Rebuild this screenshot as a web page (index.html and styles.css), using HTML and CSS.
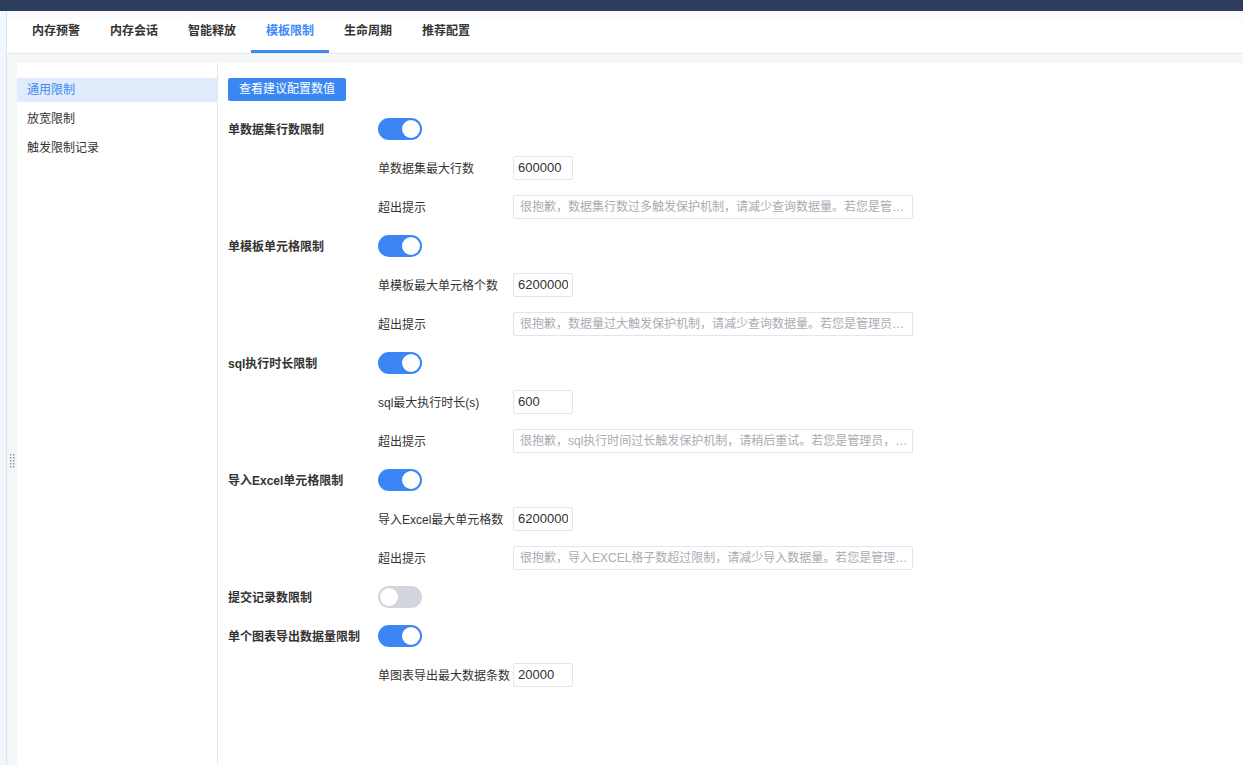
FILE: index.html
```html
<!DOCTYPE html>
<html lang="zh-CN">
<head>
<meta charset="utf-8">
<title>模板限制</title>
<link rel="stylesheet" href="styles.css">
</head>
<body>
<div class="topbar"></div>
<div class="frame">
  <div class="edge"></div>
  <div class="page">
    <nav class="tabs">
      <div class="tab">内存预警</div>
      <div class="tab">内存会话</div>
      <div class="tab">智能释放</div>
      <div class="tab active">模板限制</div>
      <div class="tab">生命周期</div>
      <div class="tab">推荐配置</div>
    </nav>
    <div class="content">
      <div class="gutter">
        <svg class="grip" width="5" height="14" viewBox="0 0 5 14">
          <g fill="#8c98ab">
            <rect x="0" y="0" width="1.5" height="1.5"/><rect x="3" y="0" width="1.5" height="1.5"/>
            <rect x="0" y="3" width="1.5" height="1.5"/><rect x="3" y="3" width="1.5" height="1.5"/>
            <rect x="0" y="6" width="1.5" height="1.5"/><rect x="3" y="6" width="1.5" height="1.5"/>
            <rect x="0" y="9" width="1.5" height="1.5"/><rect x="3" y="9" width="1.5" height="1.5"/>
            <rect x="0" y="12" width="1.5" height="1.5"/><rect x="3" y="12" width="1.5" height="1.5"/>
          </g>
        </svg>
      </div>
      <div class="panel">
        <aside class="side">
          <div class="side-item active">通用限制</div>
          <div class="side-item">放宽限制</div>
          <div class="side-item">触发限制记录</div>
        </aside>
        <main class="main">
          <button class="btn" type="button">查看建议配置数值</button>
          <div class="rows">
            <div class="row"><span class="label">单数据集行数限制</span><span class="switch on"></span></div>
            <div class="row sub"><span class="sublabel">单数据集最大行数</span><input class="num" value="600000"></div>
            <div class="row sub"><span class="sublabel">超出提示</span><input class="msg" placeholder="很抱歉，数据集行数过多触发保护机制，请减少查询数据量。若您是管理员，可调整相关配置。"></div>

            <div class="row"><span class="label">单模板单元格限制</span><span class="switch on"></span></div>
            <div class="row sub"><span class="sublabel">单模板最大单元格个数</span><input class="num" value="6200000"></div>
            <div class="row sub"><span class="sublabel">超出提示</span><input class="msg" placeholder="很抱歉，数据量过大触发保护机制，请减少查询数据量。若您是管理员，可调整相关配置。"></div>

            <div class="row"><span class="label">sql执行时长限制</span><span class="switch on"></span></div>
            <div class="row sub"><span class="sublabel">sql最大执行时长(s)</span><input class="num" value="600"></div>
            <div class="row sub"><span class="sublabel">超出提示</span><input class="msg" placeholder="很抱歉，sql执行时间过长触发保护机制，请稍后重试。若您是管理员，可调整相关配置。"></div>

            <div class="row"><span class="label">导入Excel单元格限制</span><span class="switch on"></span></div>
            <div class="row sub"><span class="sublabel">导入Excel最大单元格数</span><input class="num" value="6200000"></div>
            <div class="row sub"><span class="sublabel">超出提示</span><input class="msg" placeholder="很抱歉，导入EXCEL格子数超过限制，请减少导入数据量。若您是管理员，可调整相关配置。"></div>

            <div class="row"><span class="label">提交记录数限制</span><span class="switch"></span></div>

            <div class="row"><span class="label">单个图表导出数据量限制</span><span class="switch on"></span></div>
            <div class="row sub"><span class="sublabel">单图表导出最大数据条数</span><input class="num" value="20000"></div>
          </div>
        </main>
      </div>
    </div>
  </div>
</div>
</body>
</html>
```

FILE: styles.css
```css
* { box-sizing: border-box; }
html, body { height: 100%; }
body {
  margin: 0;
  font-family: "Liberation Sans", "Noto Sans CJK SC", sans-serif;
  font-size: 12px;
  color: #333;
  display: flex;
  flex-direction: column;
  overflow: hidden;
  background: #fff;
}
.topbar { height: 11px; background: #2c3d5b; flex: none; }
.frame { flex: 1; display: flex; min-height: 0; }
.edge { width: 7px; background: #f2f6fd; border-right: 1px solid #dfe3ea; flex: none; }
.page { flex: 1; display: flex; flex-direction: column; min-width: 0; }
.tabs {
  height: 43px;
  flex: none;
  display: flex;
  padding-left: 10px;
  border-bottom: 1px solid #e6e8ec;
  background: linear-gradient(#f7f8fa, #fff 12px);
}
.tab {
  width: 78px;
  text-align: center;
  font-weight: bold;
  font-size: 12px;
  line-height: 40px;
  color: #333;
  border-bottom: 3px solid transparent;
}
.tab.active { color: #3d8af7; border-bottom-color: #3d8af7; }
.content {
  flex: 1;
  display: flex;
  background: #f5f6f8;
  padding-top: 9px;
  min-height: 0;
}
.gutter { width: 10px; flex: none; padding-top: 391px; display: flex; justify-content: center; }
.grip { display: block; }
.panel { flex: 1; display: flex; background: #fff; min-width: 0; }
.side {
  width: 201px;
  flex: none;
  border-right: 1px solid #e6e8eb;
  padding-top: 15px;
}
.side-item {
  height: 24px;
  line-height: 24px;
  padding-left: 10px;
  margin-bottom: 5px;
  color: #333;
}
.side-item.active { background: #e0ebfb; color: #3d8af7; }
.main { flex: 1; padding: 15px 0 0 10px; }
.btn {
  display: block;
  height: 23px;
  padding: 0 11px;
  border: 0;
  border-radius: 2px;
  background: #3a87f3;
  color: #fff;
  font-family: inherit;
  font-size: 12px;
  line-height: 23px;
}
.rows { margin-top: 8px; }
.row { height: 39px; display: flex; align-items: center; }
.label { width: 150px; font-weight: bold; white-space: nowrap; }
.sub { padding-left: 150px; }
.sublabel { width: 135px; white-space: nowrap; }
.switch {
  position: relative;
  width: 44px;
  height: 22px;
  border-radius: 11px;
  background: #d2d5db;
}
.switch::after {
  content: "";
  position: absolute;
  top: 2px;
  left: 2px;
  width: 18px;
  height: 18px;
  border-radius: 50%;
  background: #fff;
}
.switch.on { background: #3b86f4; }
.switch.on::after { left: 24px; }
input {
  height: 24px;
  border: 1px solid #e3e5e9;
  border-radius: 2px;
  font-family: inherit;
  color: #333;
  outline: none;
  background: #fff;
}
.num { width: 60px; padding: 0 4px; font-size: 13px; }
.msg {
  width: 400px;
  padding: 0 2px 0 6px;
  font-size: 12px;
  text-overflow: ellipsis;
}
.msg::placeholder { color: #a9acb2; }
```
